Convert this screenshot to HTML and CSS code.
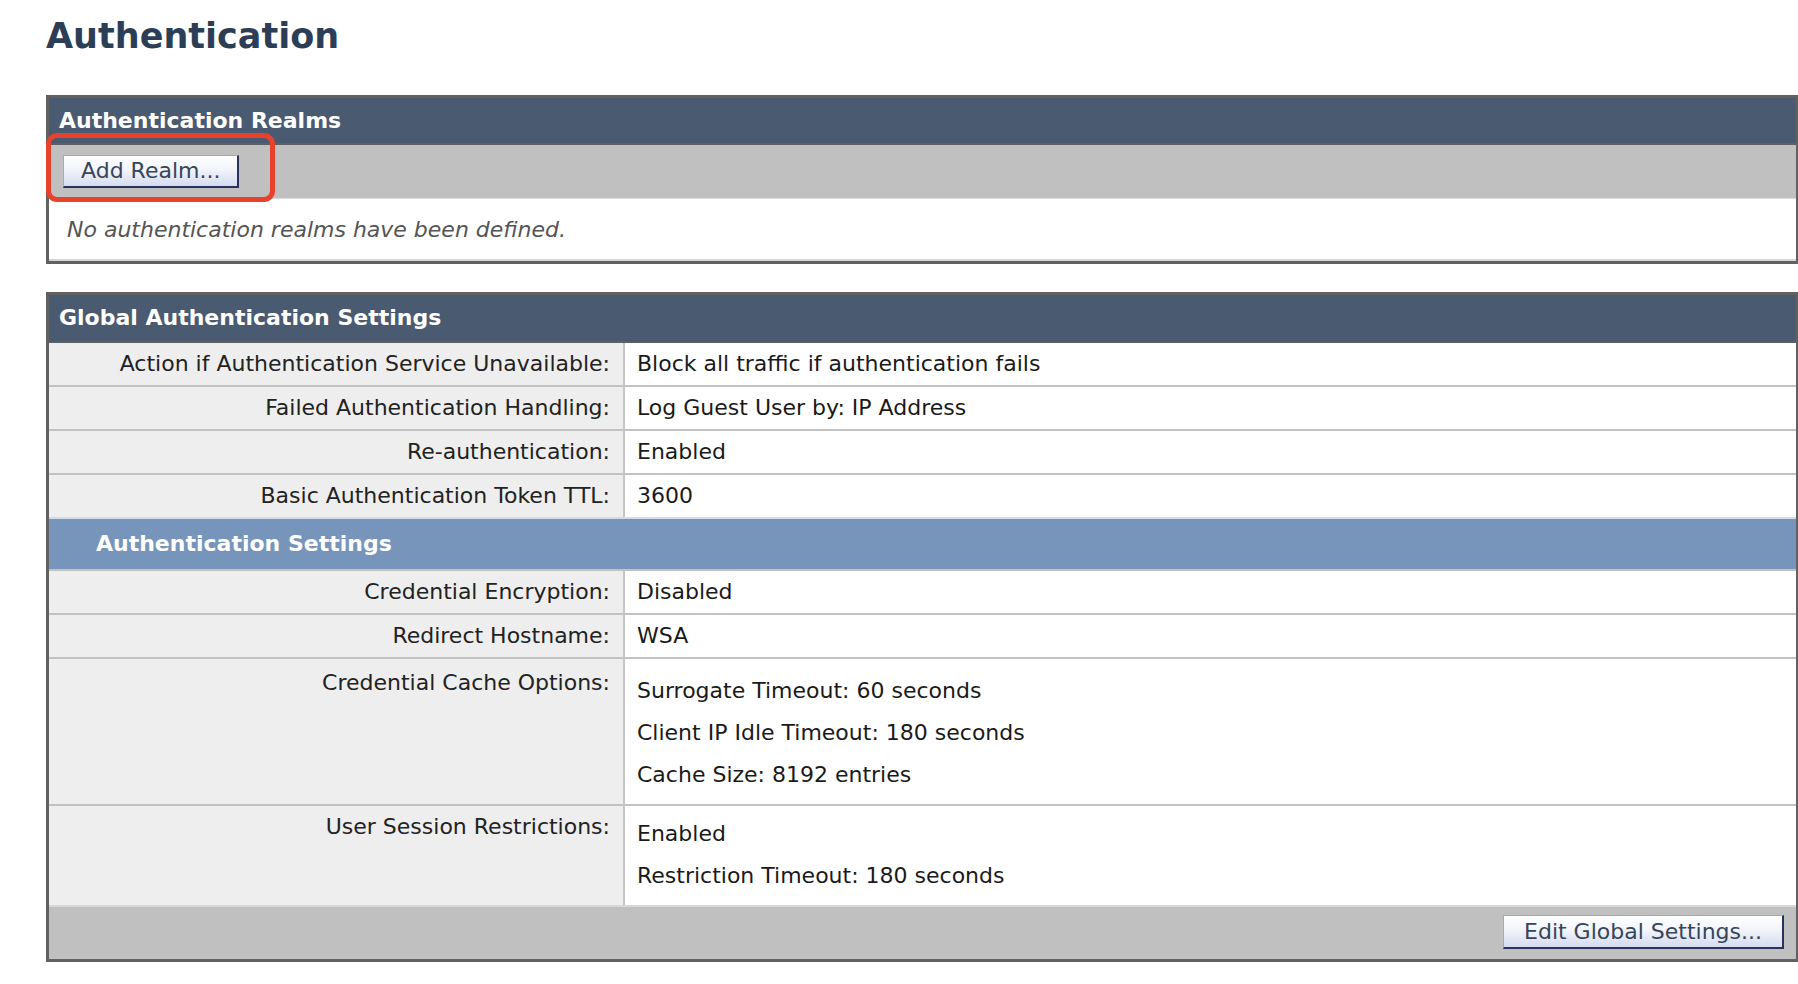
FILE: index.html
```html
<!DOCTYPE html>
<html lang="en">
<head>
<meta charset="utf-8">
<title>Authentication</title>
<link rel="stylesheet" href="styles.css">
</head>
<body>
<div class="page">
  <h1 class="page-title">Authentication</h1>

  <section class="panel panel-realms">
    <div class="panel-head">Authentication Realms</div>
    <div class="toolbar">
      <button class="btn" type="button">Add Realm...</button>
    </div>
    <div class="empty">No authentication realms have been defined.</div>
    <div class="callout"></div>
  </section>

  <section class="panel panel-global">
    <div class="panel-head">Global Authentication Settings</div>
    <div class="settings">
      <div class="row">
        <div class="label">Action if Authentication Service Unavailable:</div>
        <div class="value">Block all traffic if authentication fails</div>
      </div>
      <div class="row">
        <div class="label">Failed Authentication Handling:</div>
        <div class="value">Log Guest User by: IP Address</div>
      </div>
      <div class="row">
        <div class="label">Re-authentication:</div>
        <div class="value">Enabled</div>
      </div>
      <div class="row">
        <div class="label">Basic Authentication Token TTL:</div>
        <div class="value">3600</div>
      </div>
      <div class="subhead">Authentication Settings</div>
      <div class="row">
        <div class="label">Credential Encryption:</div>
        <div class="value">Disabled</div>
      </div>
      <div class="row">
        <div class="label">Redirect Hostname:</div>
        <div class="value">WSA</div>
      </div>
      <div class="row">
        <div class="label label-tall">Credential Cache Options:</div>
        <div class="value value-list value-list-cache">
          <div class="line">Surrogate Timeout: 60 seconds</div>
          <div class="line">Client IP Idle Timeout: 180 seconds</div>
          <div class="line">Cache Size: 8192 entries</div>
        </div>
      </div>
      <div class="row">
        <div class="label">User Session Restrictions:</div>
        <div class="value value-list">
          <div class="line">Enabled</div>
          <div class="line">Restriction Timeout: 180 seconds</div>
        </div>
      </div>
    </div>
    <div class="footer">
      <button class="btn btn-wide" type="button">Edit Global Settings...</button>
    </div>
  </section>
</div>
</body>
</html>
```

FILE: styles.css
```css
html, body {
  margin: 0;
  padding: 0;
  background: #ffffff;
}

body {
  font-family: "DejaVu Sans", Verdana, sans-serif;
  font-size: 22px;
  line-height: 26px;
  color: #1e1e1e;
}

.page {
  padding-left: 46px;
}

.page-title {
  margin: 16px 0 38px;
  font-size: 35px;
  line-height: 41px;
  font-weight: bold;
  color: #2c3e55;
}

.panel {
  position: relative;
  border: 3px solid #616161;
  border-right-width: 2px;
  margin-bottom: 28px;
  background: #ffffff;
}

.panel-head {
  background: #4a5a70;
  color: #ffffff;
  font-weight: bold;
  height: 45px;
  line-height: 45px;
  padding: 0 10px;
  border-bottom: 2px solid #5d5f63;
}

.panel-global .panel-head {
  height: 46px;
}

.toolbar {
  background: #c0c0c0;
  padding: 10px 14px 10px;
  border-bottom: 1px solid #dedede;
}

.btn {
  font-family: "DejaVu Sans", Verdana, sans-serif;
  font-size: 22px;
  height: 33px;
  line-height: 28px;
  padding: 0 17px;
  color: #35465a;
  background: linear-gradient(#ffffff 0%, #f2f4fa 45%, #d5dbef 100%);
  border-style: solid;
  border-width: 1px 2px 2px 1px;
  border-color: #a3a3dc #2c305c #2c305c #a3a3dc;
  border-radius: 0;
  cursor: pointer;
}

.btn-wide {
  height: 34px;
  padding: 0 20px;
}

.empty {
  padding: 18px 18px 16px;
  font-style: italic;
  color: #555555;
  border-bottom: 2px solid #d6d6d6;
}

.callout {
  position: absolute;
  left: -3px;
  top: 35px;
  width: 229px;
  height: 69px;
  box-sizing: border-box;
  border: 5px solid #e8412c;
  border-radius: 11px;
  pointer-events: none;
}

.row {
  display: grid;
  grid-template-columns: 576px 1fr;
  border-top: 2px solid #c2c2c2;
}

.row:first-child {
  border-top: 0;
}

.label {
  background: #eeeeee;
  text-align: right;
  padding: 8px 13px 8px 10px;
  border-right: 2px solid #c6c6c6;
  color: #222222;
}

.label-tall {
  padding-top: 11px;
}

.value {
  padding: 8px 12px;
  color: #1a1a1a;
}

.value-list {
  padding: 7px 12px 8px;
}

.value-list-cache {
  padding-top: 11px;
}

.line {
  padding: 8px 0;
}

.subhead {
  background: #7795bb;
  color: #ffffff;
  font-weight: bold;
  height: 50px;
  line-height: 50px;
  padding-left: 47px;
  border-top: 2px solid #d2dbe6;
}

.footer {
  background: #c0c0c0;
  border-top: 2px solid #d8d8d8;
  padding: 8px 12px 10px;
  display: flex;
  justify-content: flex-end;
}
```
